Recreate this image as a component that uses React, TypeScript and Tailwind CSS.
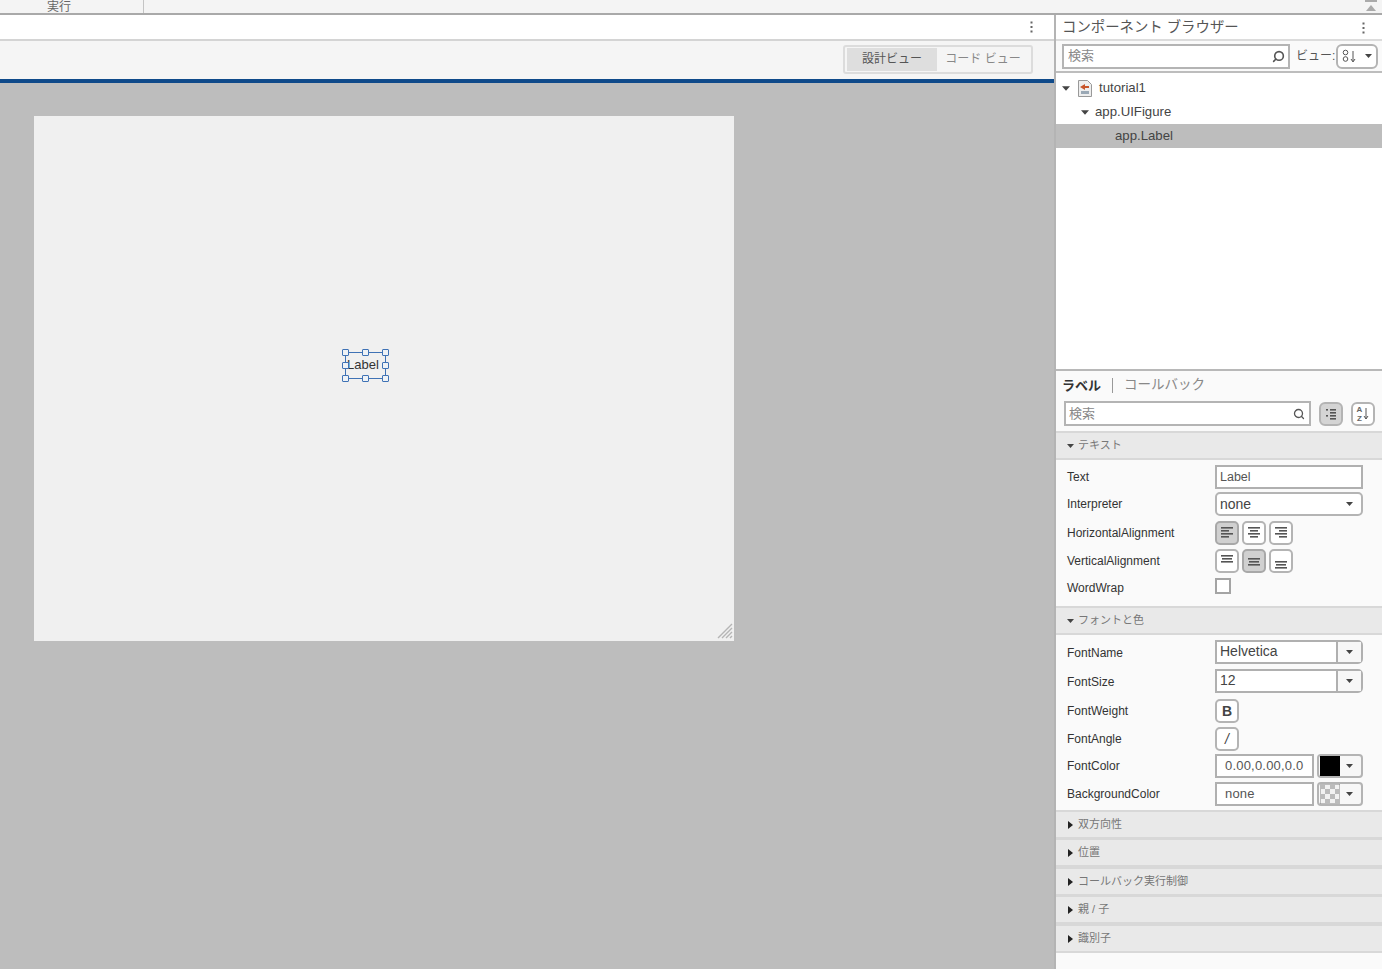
import { Search } from "lucide-react";

const font = "font-['Liberation_Sans','Noto_Sans_CJK_JP',sans-serif]";

function CaretDown({ className = "" }: { className?: string }) {
  return (
    <svg width="7" height="4" viewBox="0 0 7 4" className={className}>
      <path d="M0 0h7L3.5 4z" fill="#444" />
    </svg>
  );
}

function CaretRight() {
  return (
    <svg width="5" height="8" viewBox="0 0 5 8">
      <path d="M0 0l5 4-5 4z" fill="#222" />
    </svg>
  );
}

function Section({ title, open, h }: { title: string; open?: boolean; h: string }) {
  return (
    <div className={`flex items-center gap-[4px] border-y-2 border-[#d8d8d8] bg-[#e9e9e9] pl-[11px] text-[11px] text-[#777] ${h}`}>
      <span className="flex w-[7px] justify-center">
        {open ? <CaretDown /> : <CaretRight />}
      </span>
      <span>{title}</span>
    </div>
  );
}

function Row({ label, h, children }: { label: string; h: string; children: React.ReactNode }) {
  return (
    <div className={`flex items-center ${h}`}>
      <span className="w-[159px] pl-[11px] text-[12px] text-[#333]">{label}</span>
      {children}
    </div>
  );
}

function IconBtn({ active, children }: { active?: boolean; children: React.ReactNode }) {
  return (
    <div className={`flex h-[24px] w-[24px] items-center justify-center rounded-[5px] border-2 ${active ? "border-[#a8a8a8] bg-[#d0d0d0]" : "border-[#b4b4b4] bg-white"}`}>
      {children}
    </div>
  );
}

function Lines({ rows }: { rows: [number, number, number][] }) {
  return (
    <svg width="16" height="16" viewBox="0 0 16 16">
      {rows.map(([x, y, w], i) => (
        <rect key={i} x={x} y={y} width={w} height="1.6" fill="#555" />
      ))}
    </svg>
  );
}

function Combo({ value, className = "" }: { value: string; className?: string }) {
  return (
    <div className={`flex h-[24px] w-[148px] rounded-r-[5px] border-2 border-[#b0b0b0] bg-white ${className}`}>
      <span className="flex-1 pl-[3px] text-[14px] leading-[19px] text-[#444]">{value}</span>
      <span className="flex w-[25px] items-center justify-center border-l-2 border-[#b0b0b0] bg-[#f7f7f7]">
        <CaretDown />
      </span>
    </div>
  );
}

function ColorRow({ value, swatch }: { value: string; swatch: React.ReactNode }) {
  return (
    <div className="flex gap-[3px]">
      <div className="h-[24px] w-[99px] overflow-hidden whitespace-nowrap border-2 border-[#b0b0b0] bg-white pl-[8px] text-[13px] leading-[19px] tracking-[0.2px] text-[#555]">
        {value}
      </div>
      <div className="flex h-[24px] w-[46px] items-center gap-[6px] rounded-[4px] border-2 border-[#b4b4b4] bg-[#f7f7f7] pl-[1px]">
        {swatch}
        <CaretDown />
      </div>
    </div>
  );
}

function Checker() {
  return (
    <svg width="20" height="20" viewBox="0 0 20 20">
      <rect width="20" height="20" fill="#f2f2f2" stroke="#888" />
      {[0, 5, 10, 15].flatMap((y, r) =>
        [0, 1].map((c) => <rect key={`${y}-${c}`} x={(r % 2 ? 5 : 0) + c * 10} y={y} width="5" height="5" fill="#bbb" />)
      )}
    </svg>
  );
}

function Handle({ className }: { className: string }) {
  return <span className={`absolute h-[7px] w-[7px] rounded-[1px] border-[1.5px] border-[#3f72b5] bg-[#eef2f6] ${className}`} />;
}

function Dots() {
  return (
    <svg width="3" height="12" viewBox="0 0 3 12">
      <rect x="0.5" y="0.5" width="2" height="2" fill="#666" />
      <rect x="0.5" y="5" width="2" height="2" fill="#666" />
      <rect x="0.5" y="9.5" width="2" height="2" fill="#666" />
    </svg>
  );
}

export default function App() {
  return (
    <div className={`${font} flex h-[969px] w-[1382px] flex-col overflow-hidden bg-white text-[#333]`}>
      {/* tab strip */}
      <div className="flex h-[15px] shrink-0 items-start justify-between border-b-2 border-[#a9a9a9] bg-[#f4f4f4]">
        <div className="h-[13px] w-[144px] overflow-hidden border-r border-[#c4c4c4] pl-[47px] text-[12px] leading-[14px] text-[#666]">
          実行
        </div>
        <svg width="12" height="13" viewBox="0 0 12 13" className="mr-[5px]">
          <rect x="0" y="0" width="12" height="2" fill="#aaa" />
          <path d="M1 11L6 5l5 6z" fill="#aaa" />
        </svg>
      </div>

      <div className="flex min-h-0 flex-1">
        {/* designer side */}
        <div className="flex w-[1056px] shrink-0 flex-col border-r-2 border-[#b4b4b4]">
          <div className="flex h-[26px] shrink-0 items-center justify-end border-b-2 border-[#d4d4d4] bg-white pr-[21px] text-[#666]">
            <Dots />
          </div>
          <div className="flex h-[38px] shrink-0 items-center justify-end bg-[#f5f5f5] pb-[2px] pr-[21px]">
            <div className="flex h-[29px] items-center rounded-[3px] border-2 border-[#dcdcdc] px-[2px]">
              <span className="flex h-[23px] w-[90px] items-center justify-center bg-[#dedede] text-[12px] text-[#555]">設計ビュー</span>
              <span className="flex h-[23px] w-[92px] items-center justify-center text-[12px] text-[#888]">コード ビュー</span>
            </div>
          </div>
          <div className="h-[4px] shrink-0 bg-[#0f4a8a]" />
          <div className="flex-1 bg-[#bdbdbd] pl-[34px] pt-[33px]">
            <div className="relative h-[525px] w-[700px] bg-[#f0f0f0]">
              {/* selected label */}
              <div className="absolute left-[311px] top-[236px] h-[27px] w-[41px] border border-[#3f72b5]">
                <span className="absolute left-[1px] top-[4px] text-[13px] leading-[16px] text-[#333]">Label</span>
                <Handle className="-left-[4px] -top-[4px]" />
                <Handle className="left-[16px] -top-[4px]" />
                <Handle className="-right-[4px] -top-[4px]" />
                <Handle className="-left-[4px] top-[9px]" />
                <Handle className="-right-[4px] top-[9px]" />
                <Handle className="-left-[4px] -bottom-[4px]" />
                <Handle className="left-[16px] -bottom-[4px]" />
                <Handle className="-right-[4px] -bottom-[4px]" />
              </div>
              <svg width="16" height="16" viewBox="0 0 16 16" className="absolute bottom-[2px] right-[1px]">
                <path d="M15 1L1 15M15 5L5 15M15 9L9 15M15 13L13 15" stroke="#b5b5b5" strokeWidth="1.4" />
              </svg>
            </div>
          </div>
        </div>

        {/* right side */}
        <div className="flex min-w-0 flex-1 flex-col bg-[#fafafa]">
          <div className="flex h-[26px] shrink-0 items-center justify-between border-b-2 border-[#dcdcdc] bg-white pl-[6px] pr-[17px] pt-[1px]">
            <span className="text-[14.4px] text-[#555]">コンポーネント ブラウザー</span>
            <Dots />
          </div>
          <div className="flex h-[32px] shrink-0 items-center border-b-2 border-[#bdbdbd] bg-[#fafafa] pl-[6px]">
            <div className="flex h-[25px] w-[228px] items-center justify-between border-2 border-[#b4b4b4] bg-white pl-[4px] pr-[3px] text-[13px] text-[#888]">
              検索
              <Search size={13} strokeWidth={3} className="-scale-x-100 text-[#555]" />
            </div>
            <span className="ml-[6px] whitespace-nowrap text-[12px] text-[#555]">ビュー:</span>
            <div className="ml-[1px] flex h-[25px] w-[42px] items-center gap-[7px] rounded-[6px] border-2 border-[#b4b4b4] bg-white pl-[3px]">
              <svg width="17" height="15" viewBox="0 0 17 15">
                <circle cx="4.5" cy="3.5" r="2.3" fill="none" stroke="#555" />
                <circle cx="4.5" cy="10" r="2.3" fill="none" stroke="#555" />
                <path d="M12 2v10M10 10l2 3 2-3" fill="none" stroke="#555" />
              </svg>
              <CaretDown />
            </div>
          </div>
          <div className="flex h-[298px] shrink-0 flex-col border-b-2 border-[#b8b8b8] bg-white pt-[3px] text-[13.2px] text-[#444]">
            <div className="flex h-[24px] items-center pl-[6px]">
              <CaretDown className="h-[5px] w-[8px]" />
              <svg width="16" height="17" viewBox="0 0 16 17" className="ml-[7px]">
                <path d="M1.5 0.5h9l4 4v12h-13z" fill="#eee" stroke="#999" />
                <path d="M3 7l5-3v2h4v2H8v2z" fill="#c8552b" />
                <rect x="4" y="11" width="8" height="3" fill="#9aa8b5" />
              </svg>
              <span className="ml-[6px]">tutorial1</span>
            </div>
            <div className="flex h-[24px] items-center pl-[25px]">
              <CaretDown className="h-[5px] w-[8px]" />
              <span className="ml-[6px]">app.UIFigure</span>
            </div>
            <div className="flex h-[24px] items-center bg-[#bdbdbd] pl-[59px]">app.Label</div>
          </div>

          {/* inspector */}
          <div className="flex h-[28px] shrink-0 items-center pl-[6px] pt-[1px]">
            <span className="text-[13px] font-bold text-[#333]">ラベル</span>
            <span className="ml-[11px] h-[15px] w-px bg-[#999]" />
            <span className="ml-[11px] text-[13.5px] text-[#888]">コールバック</span>
          </div>
          <div className="flex h-[31px] shrink-0 items-center pb-[2px] pl-[8px]">
            <div className="flex h-[25px] w-[247px] items-center justify-between border-2 border-[#b4b4b4] bg-white pl-[3px] pr-[4px] text-[13px] text-[#888]">
              検索
              <Search size={12} strokeWidth={2.6} className="text-[#555]" />
            </div>
            <div className="ml-[8px] flex h-[24px] w-[24px] items-center justify-center rounded-[6px] border-2 border-[#b4b4b4] bg-[#d4d4d4]">
              <Lines rows={[[3, 3, 2], [3, 9, 2], [7, 3, 6], [7, 6, 6], [7, 9, 6], [7, 12, 6]]} />
            </div>
            <div className="ml-[8px] flex h-[24px] w-[24px] items-center justify-center rounded-[6px] border-2 border-[#b4b4b4] bg-white text-[8px] font-bold leading-[9px] text-[#666]">
              <span className="mr-[1px] text-center">A<br />Z</span>
              <svg width="6" height="14" viewBox="0 0 6 14">
                <path d="M3 1v11M1 9l2 3 2-3" fill="none" stroke="#555" />
              </svg>
            </div>
          </div>
          <Section title="テキスト" open h="h-[29px] shrink-0 mt-[1px]" />
          <div className="flex h-[146px] shrink-0 flex-col pt-[4px]">
            <Row label="Text" h="h-[26px]">
              <div className="h-[24px] w-[148px] border-2 border-[#b0b0b0] bg-white pl-[3px] text-[12.5px] leading-[20px] text-[#555]">Label</div>
            </Row>
            <Row label="Interpreter" h="h-[28px]">
              <div className="flex h-[24px] w-[148px] items-center justify-between rounded-[5px] border-2 border-[#b4b4b4] bg-white pl-[3px] pr-[8px] text-[14px] text-[#444]">
                none
                <CaretDown />
              </div>
            </Row>
            <Row label="HorizontalAlignment" h="h-[29px]">
              <div className="flex gap-[3px]">
                <IconBtn active><Lines rows={[[2, 2, 12], [2, 5, 8], [2, 8, 12], [2, 11, 8]]} /></IconBtn>
                <IconBtn><Lines rows={[[2, 2, 12], [4, 5, 8], [2, 8, 12], [4, 11, 8]]} /></IconBtn>
                <IconBtn><Lines rows={[[2, 2, 12], [6, 5, 8], [2, 8, 12], [6, 11, 8]]} /></IconBtn>
              </div>
            </Row>
            <Row label="VerticalAlignment" h="h-[27px]">
              <div className="flex gap-[3px]">
                <IconBtn><Lines rows={[[2, 2, 12], [3, 5, 10], [2, 8, 12]]} /></IconBtn>
                <IconBtn active><Lines rows={[[2, 5, 12], [3, 8, 10], [2, 11, 12]]} /></IconBtn>
                <IconBtn><Lines rows={[[2, 8, 12], [3, 11, 10], [2, 14, 12]]} /></IconBtn>
              </div>
            </Row>
            <Row label="WordWrap" h="h-[27px]">
              <div className="-mt-[3px] h-[16px] w-[16px] border-2 border-[#a4a4a4] bg-white" />
            </Row>
          </div>
          <Section title="フォントと色" open h="h-[29px] shrink-0" />
          <div className="flex h-[175px] shrink-0 flex-col pt-[4px]">
            <Row label="FontName" h="h-[28px]"><Combo value="Helvetica" className="-mt-[3px]" /></Row>
            <Row label="FontSize" h="h-[29px]"><Combo value="12" className="-mt-[1px]" /></Row>
            <Row label="FontWeight" h="h-[29px]">
              <IconBtn><span className="text-[14px] font-bold leading-none text-[#444]">B</span></IconBtn>
            </Row>
            <Row label="FontAngle" h="h-[27px]">
              <IconBtn><span className="text-[14px] italic leading-none text-[#444]">/</span></IconBtn>
            </Row>
            <Row label="FontColor" h="h-[28px]">
              <ColorRow value="0.00,0.00,0.0" swatch={<span className="h-[20px] w-[20px] bg-black" />} />
            </Row>
            <Row label="BackgroundColor" h="h-[27px]">
              <ColorRow value="none" swatch={<Checker />} />
            </Row>
          </div>
          <Section title="双方向性" h="h-[29px] shrink-0" />
          <Section title="位置" h="h-[29px] shrink-0 -mt-[1px]" />
          <Section title="コールバック実行制御" h="h-[29px] shrink-0" />
          <Section title="親 / 子" h="h-[29px] shrink-0 -mt-[1px]" />
          <Section title="識別子" h="h-[29px] shrink-0" />
        </div>
      </div>
    </div>
  );
}
